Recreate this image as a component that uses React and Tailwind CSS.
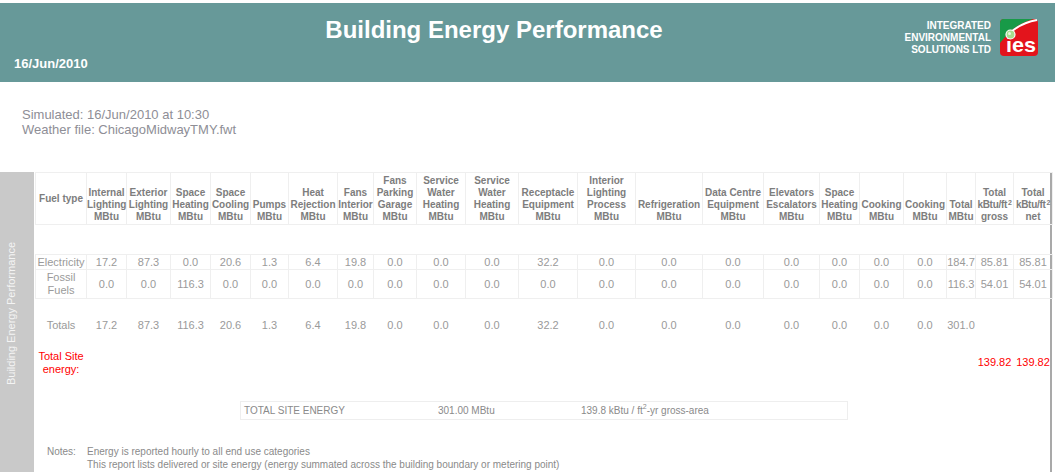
import React from "react";

const cols = [
  { w: 40, h: ["Internal", "Lighting", "MBtu"] },
  { w: 44, h: ["Exterior", "Lighting", "MBtu"] },
  { w: 40, h: ["Space", "Heating", "MBtu"] },
  { w: 40, h: ["Space", "Cooling", "MBtu"] },
  { w: 38, h: ["Pumps", "MBtu"] },
  { w: 49, h: ["Heat", "Rejection", "MBtu"] },
  { w: 36, h: ["Fans", "Interior", "MBtu"] },
  { w: 43, h: ["Fans", "Parking", "Garage", "MBtu"] },
  { w: 49, h: ["Service", "Water", "Heating", "MBtu"] },
  { w: 53, h: ["Service", "Water", "Heating", "MBtu"] },
  { w: 59, h: ["Receptacle", "Equipment", "MBtu"] },
  { w: 58, h: ["Interior", "Lighting", "Process", "MBtu"] },
  { w: 67, h: ["Refrigeration", "MBtu"] },
  { w: 61, h: ["Data Centre", "Equipment", "MBtu"] },
  { w: 56, h: ["Elevators", "Escalators", "MBtu"] },
  { w: 40, h: ["Space", "Heating", "MBtu"] },
  { w: 44, h: ["Cooking", "MBtu"] },
  { w: 43, h: ["Cooking", "MBtu"] },
  { w: 29, h: ["Total", "MBtu"] },
  { w: 38, h: ["Total", "kBtu/ft2", "gross"] },
  { w: 39, h: ["Total", "kBtu/ft2", "net"] },
];

const elec = ["17.2","87.3","0.0","20.6","1.3","6.4","19.8","0.0","0.0","0.0","32.2","0.0","0.0","0.0","0.0","0.0","0.0","0.0","184.7","85.81","85.81"];
const fossil = ["0.0","0.0","116.3","0.0","0.0","0.0","0.0","0.0","0.0","0.0","0.0","0.0","0.0","0.0","0.0","0.0","0.0","0.0","116.3","54.01","54.01"];
const totals = ["17.2","87.3","116.3","20.6","1.3","6.4","19.8","0.0","0.0","0.0","32.2","0.0","0.0","0.0","0.0","0.0","0.0","0.0","301.0","",""];

function HeadLine({ t }) {
  if (t === "kBtu/ft2")
    return (
      <div className="-mx-[3px] tracking-[-0.3px]">
        kBtu/ft<span className="text-[7px] align-top relative -top-[2px] ml-[1px]">2</span>
      </div>
    );
  return <div>{t}</div>;
}

function Logo() {
  return (
    <svg width="38" height="37" viewBox="0 0 38 37">
      <rect width="38" height="37" rx="4" fill="#e3141c" />
      <path d="M4 0 H33 Q18 5 10 13 Q4 19 0 24 V4 Q0 0 4 0 Z" fill="#189a48" />
      <path d="M9 15 Q20 4 37 1" stroke="#fff" strokeWidth="2" fill="none" />
      <text x="21" y="33" fontSize="21" fontWeight="bold" fill="#fff" textAnchor="middle" fontFamily="Liberation Sans, Arial, sans-serif" textLength="30" lengthAdjust="spacingAndGlyphs">ies</text>
      <circle cx="10.5" cy="15.5" r="4.5" fill="#a6de8e" stroke="#fff" strokeWidth="1.2" />
      <circle cx="9.5" cy="14.5" r="1.5" fill="#e8f8e0" />
    </svg>
  );
}

export default function App() {
  return (
    <div className="w-[1055px] h-[472px] overflow-hidden bg-white font-['Liberation_Sans',Arial,sans-serif]">
      <div className="mt-[3px] h-[79px] bg-[#679999] flex text-white">
        <div className="w-[312px] pl-[14px] pt-[51px] text-[13px] font-bold">16/Jun/2010</div>
        <div className="w-[364px] text-center pt-[13px] text-[24px] leading-[28px] font-bold">Building Energy Performance</div>
        <div className="flex-1 flex justify-end items-start pt-[16px] pr-[17px] gap-[9px]">
          <div className="text-right text-[10px] font-bold leading-[12px] pt-[1px]">
            <div>INTEGRATED</div>
            <div>ENVIRONMENTAL</div>
            <div>SOLUTIONS LTD</div>
          </div>
          <Logo />
        </div>
      </div>

      <div className="pl-[22px] pt-[25px] h-[90px] text-[13px] leading-[15px] text-[#8e8e96]">
        <div>Simulated: 16/Jun/2010 at 10:30</div>
        <div>Weather file: ChicagoMidwayTMY.fwt</div>
      </div>

      <div className="flex h-[300px]">
        <div className="w-[34px] bg-[#c9c9c9] flex items-center pl-[3px]">
          <div className="[writing-mode:vertical-rl] rotate-180 text-[11px] text-[#f4f4f4] whitespace-nowrap mb-[16px]">
            Building Energy Performance
          </div>
        </div>
        <div className="w-[1018px] border-r-2 border-[#a9a9a9] pl-[1px]">
          <table className="table-fixed w-[1017px] border-collapse text-center">
            <colgroup>
              <col className="w-[51px]" />
              {cols.map((c, i) => (
                <col key={i} style={{ width: c.w }} />
              ))}
            </colgroup>
            <thead>
              <tr className="h-[52px] text-[10px] font-bold leading-[12px] text-[#7d7d7d]">
                <th className="border border-[#efefef] align-middle">Fuel type</th>
                {cols.map((c, i) => (
                  <th key={i} className="border border-[#efefef] align-bottom p-0 pb-[1px] whitespace-nowrap">
                    {c.h.map((t, j) => (
                      <HeadLine key={j} t={t} />
                    ))}
                  </th>
                ))}
              </tr>
            </thead>
            <tbody className="text-[11px] text-[#9a9a9a]">
              <tr className="h-[30px]">
                <td colSpan={22}></td>
              </tr>
              <tr className="h-[15px] leading-[13px]">
                <td className="border border-[#efefef]">Electricity</td>
                {elec.map((v, i) => (
                  <td key={i} className="border border-[#efefef]">{v}</td>
                ))}
              </tr>
              <tr className="h-[29px] leading-[13px]">
                <td className="border border-[#efefef]">Fossil<br />Fuels</td>
                {fossil.map((v, i) => (
                  <td key={i} className="border border-[#efefef]">{v}</td>
                ))}
              </tr>
              <tr className="h-[15px]">
                <td colSpan={22}></td>
              </tr>
              <tr className="h-[24px]">
                <td>Totals</td>
                {totals.map((v, i) => (
                  <td key={i}>{v}</td>
                ))}
              </tr>
              <tr className="h-[12px]">
                <td colSpan={22}></td>
              </tr>
              <tr className="h-[26px] leading-[13px] text-[#ff0000]">
                <td>Total Site<br />energy:</td>
                <td colSpan={19}></td>
                <td>139.82</td>
                <td>139.82</td>
              </tr>
            </tbody>
          </table>

          <div className="ml-[205px] mt-[25px] w-[608px] h-[19px] border border-[#eeeeee] flex items-center text-[10px] text-[#8a8a8a]">
            <div className="w-[197px] pl-[3px]">TOTAL SITE ENERGY</div>
            <div className="w-[143px]">301.00 MBtu</div>
            <div>
              139.8 kBtu / ft<span className="text-[7px] align-top relative -top-[1px]">2</span>-yr gross-area
            </div>
          </div>

          <div className="mt-[25px] flex text-[10px] leading-[13px] text-[#8a8a8a]">
            <div className="w-[52px] pl-[12px]">Notes:</div>
            <div>
              <div>Energy is reported hourly to all end use categories</div>
              <div>This report lists delivered or site energy (energy summated across the building boundary or metering point)</div>
            </div>
          </div>
        </div>
      </div>
    </div>
  );
}
